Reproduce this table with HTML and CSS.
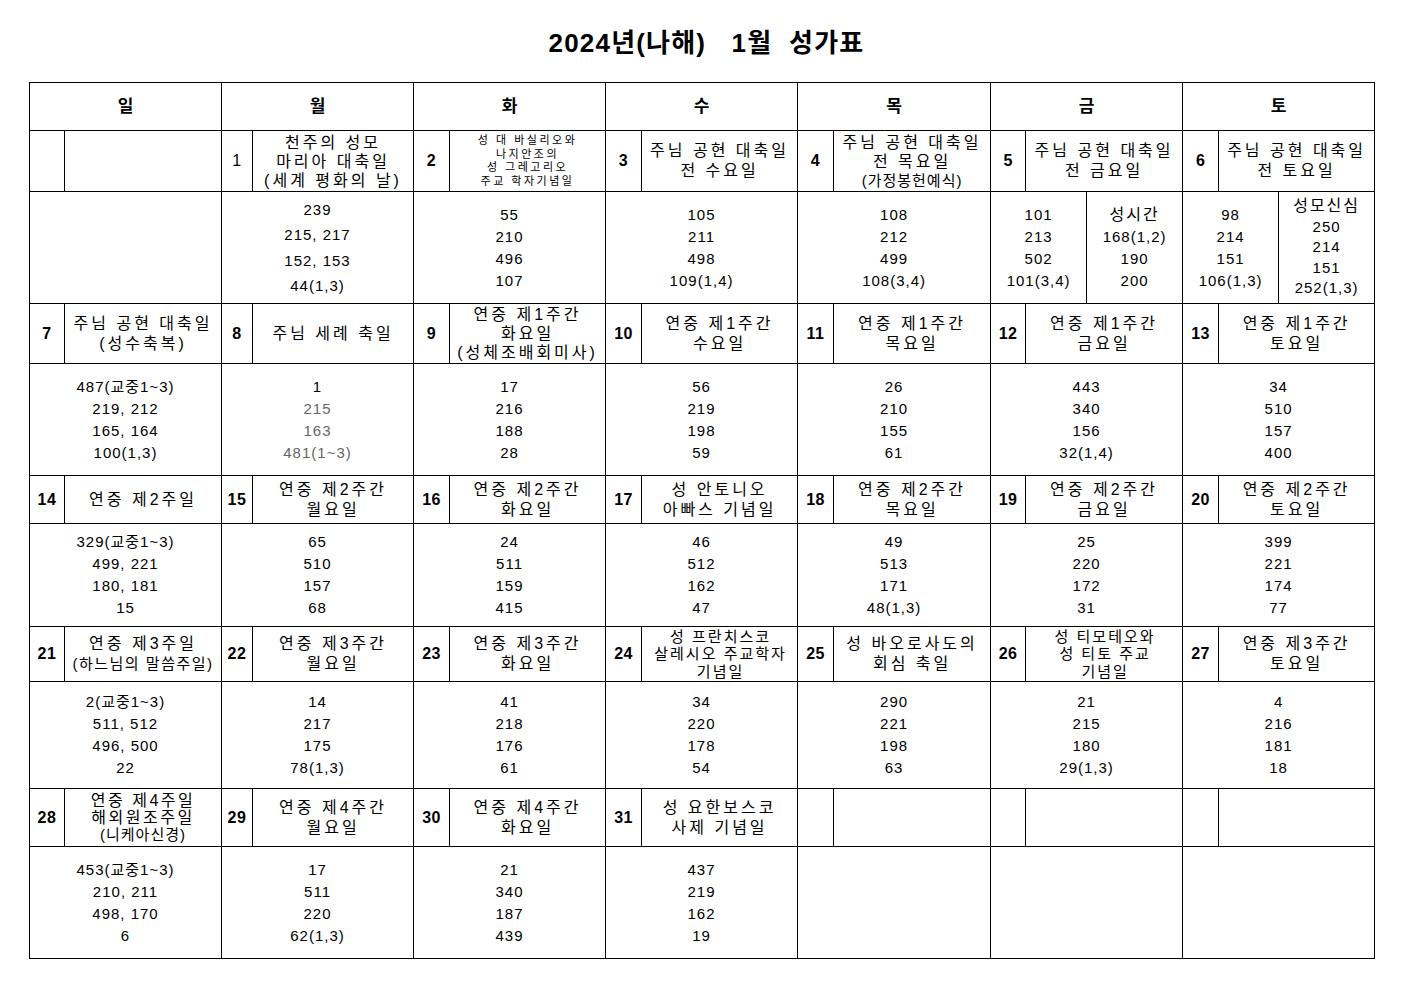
FILE: index.html
```html
<!DOCTYPE html>
<html lang="ko">
<head>
<meta charset="utf-8">
<title>2024년(나해) 1월 성가표</title>
<link rel="stylesheet" href="styles.css">
</head>
<body>
<div class="title">2024년(나해)&nbsp;&nbsp; 1월&nbsp; 성가표</div>
<table class="cal">
  <colgroup>
    <col class="c35"><col class="c157">
    <col class="c31"><col class="c161">
    <col class="c36"><col class="c156">
    <col class="c36"><col class="c156">
    <col class="c36"><col class="c157">
    <col class="c35"><col class="c157">
    <col class="c36"><col class="c156">
  </colgroup>
  <tr class="hd">
    <th colspan="2">일</th><th colspan="2">월</th><th colspan="2">화</th><th colspan="2">수</th><th colspan="2">목</th><th colspan="2">금</th><th colspan="2">토</th>
  </tr>
  <tr class="r61">
    <td class="dn"></td><td class="nm"></td>
    <td class="dn thin">1</td><td class="nm t3">천주의 성모<br>마리아 대축일<br>(세계 평화의 날)</td>
    <td class="dn">2</td><td class="nm tiny">성 대 바실리오와<br>나지안조의<br>성 그레고리오<br>주교 학자기념일</td>
    <td class="dn">3</td><td class="nm">주님 공현 대축일<br>전 수요일</td>
    <td class="dn">4</td><td class="nm t3">주님 공현 대축일<br>전 목요일<br><span class="sm">(가정봉헌예식)</span></td>
    <td class="dn">5</td><td class="nm">주님 공현 대축일<br>전 금요일</td>
    <td class="dn">6</td><td class="nm">주님 공현 대축일<br>전 토요일</td>
  </tr>
  <tr class="r112 hy">
    <td colspan="2"></td>
    <td colspan="2" class="wide">239<br>215, 217<br>152, 153<br>44(1,3)</td>
    <td colspan="2">55<br>210<br>496<br>107</td>
    <td colspan="2">105<br>211<br>498<br>109(1,4)</td>
    <td colspan="2">108<br>212<br>499<br>108(3,4)</td>
    <td colspan="2" class="sp"><div class="split"><div class="half"><div>101<br>213<br>502<br>101(3,4)</div></div><div class="half"><div><span class="lbl">성시간</span><br>168(1,2)<br>190<br>200</div></div></div></td>
    <td colspan="2" class="sp"><div class="split"><div class="half"><div>98<br>214<br>151<br>106(1,3)</div></div><div class="half five"><div><span class="lbl">성모신심</span><br>250<br>214<br>151<br>252(1,3)</div></div></div></td>
  </tr>
  <tr class="r60">
    <td class="dn">7</td><td class="nm">주님 공현 대축일<br>(성수축복)</td>
    <td class="dn">8</td><td class="nm">주님 세례 축일</td>
    <td class="dn">9</td><td class="nm t3">연중 제1주간<br>화요일<br>(성체조배회미사)</td>
    <td class="dn">10</td><td class="nm">연중 제1주간<br>수요일</td>
    <td class="dn">11</td><td class="nm">연중 제1주간<br>목요일</td>
    <td class="dn">12</td><td class="nm">연중 제1주간<br>금요일</td>
    <td class="dn">13</td><td class="nm">연중 제1주간<br>토요일</td>
  </tr>
  <tr class="r112 hy">
    <td colspan="2">487(교중1~3)<br>219, 212<br>165, 164<br>100(1,3)</td>
    <td colspan="2">1<br><span class="gray">215<br>163<br>481(1~3)</span></td>
    <td colspan="2">17<br>216<br>188<br>28</td>
    <td colspan="2">56<br>219<br>198<br>59</td>
    <td colspan="2">26<br>210<br>155<br>61</td>
    <td colspan="2">443<br>340<br>156<br>32(1,4)</td>
    <td colspan="2">34<br>510<br>157<br>400</td>
  </tr>
  <tr class="r48">
    <td class="dn">14</td><td class="nm">연중 제2주일</td>
    <td class="dn">15</td><td class="nm">연중 제2주간<br>월요일</td>
    <td class="dn">16</td><td class="nm">연중 제2주간<br>화요일</td>
    <td class="dn">17</td><td class="nm">성 안토니오<br>아빠스 기념일</td>
    <td class="dn">18</td><td class="nm">연중 제2주간<br>목요일</td>
    <td class="dn">19</td><td class="nm">연중 제2주간<br>금요일</td>
    <td class="dn">20</td><td class="nm">연중 제2주간<br>토요일</td>
  </tr>
  <tr class="r103 hy">
    <td colspan="2">329(교중1~3)<br>499, 221<br>180, 181<br>15</td>
    <td colspan="2">65<br>510<br>157<br>68</td>
    <td colspan="2">24<br>511<br>159<br>415</td>
    <td colspan="2">46<br>512<br>162<br>47</td>
    <td colspan="2">49<br>513<br>171<br>48(1,3)</td>
    <td colspan="2">25<br>220<br>172<br>31</td>
    <td colspan="2">399<br>221<br>174<br>77</td>
  </tr>
  <tr class="r55">
    <td class="dn">21</td><td class="nm">연중 제3주일<br><span class="sm2">(하느님의 말씀주일)</span></td>
    <td class="dn">22</td><td class="nm">연중 제3주간<br>월요일</td>
    <td class="dn">23</td><td class="nm">연중 제3주간<br>화요일</td>
    <td class="dn">24</td><td class="nm s15">성 프란치스코<br>살레시오 주교학자<br>기념일</td>
    <td class="dn">25</td><td class="nm">성 바오로사도의<br>회심 축일</td>
    <td class="dn">26</td><td class="nm s15">성 티모테오와<br>성 티토 주교<br>기념일</td>
    <td class="dn">27</td><td class="nm">연중 제3주간<br>토요일</td>
  </tr>
  <tr class="r107 hy">
    <td colspan="2">2(교중1~3)<br>511, 512<br>496, 500<br>22</td>
    <td colspan="2">14<br>217<br>175<br>78(1,3)</td>
    <td colspan="2">41<br>218<br>176<br>61</td>
    <td colspan="2">34<br>220<br>178<br>54</td>
    <td colspan="2">290<br>221<br>198<br>63</td>
    <td colspan="2">21<br>215<br>180<br>29(1,3)</td>
    <td colspan="2">4<br>216<br>181<br>18</td>
  </tr>
  <tr class="r58">
    <td class="dn">28</td><td class="nm t3b">연중 제4주일<br>해외원조주일<br><span class="sm">(니케아신경)</span></td>
    <td class="dn">29</td><td class="nm">연중 제4주간<br>월요일</td>
    <td class="dn">30</td><td class="nm">연중 제4주간<br>화요일</td>
    <td class="dn">31</td><td class="nm">성 요한보스코<br>사제 기념일</td>
    <td class="dn"></td><td class="nm"></td>
    <td class="dn"></td><td class="nm"></td>
    <td class="dn"></td><td class="nm"></td>
  </tr>
  <tr class="r112 hy">
    <td colspan="2">453(교중1~3)<br>210, 211<br>498, 170<br>6</td>
    <td colspan="2">17<br>511<br>220<br>62(1,3)</td>
    <td colspan="2">21<br>340<br>187<br>439</td>
    <td colspan="2">437<br>219<br>162<br>19</td>
    <td colspan="2"></td>
    <td colspan="2"></td>
    <td colspan="2"></td>
  </tr>
</table>
</body>
</html>
```

FILE: styles.css
```css
html, body {
  margin: 0;
  padding: 0;
  background: #fff;
  color: #000;
  font-family: "Liberation Sans", "Noto Sans CJK KR", sans-serif;
}

.title {
  height: 80px;
  display: flex;
  align-items: center;
  justify-content: center;
  font-size: 26px;
  font-weight: bold;
  letter-spacing: 1.2px;
  padding-left: 10px;
  margin-bottom: 2px;
  box-sizing: border-box;
}

.cal {
  margin-left: 29px;
  border-collapse: collapse;
  table-layout: fixed;
  width: 1345px;
}

.cal th, .cal td {
  border: 1px solid #000;
  padding: 0;
  text-align: center;
  vertical-align: middle;
  overflow: hidden;
}

.c31 { width: 31px; }
.c35 { width: 35px; }
.c36 { width: 36px; }
.c156 { width: 156px; }
.c157 { width: 157px; }
.c161 { width: 161px; }

.hd th {
  height: 43px;
  font-size: 17px;
  font-weight: bold;
  padding-bottom: 4px;
}

.r48 td { height: 47px; }
.r55 td { height: 54px; }
.r58 td { height: 57px; }
.r60 td { height: 59px; }
.r61 td { height: 60px; }
.r103 td { height: 102px; }
.r107 td { height: 106px; }
.r112 td { height: 111px; }

.dn {
  font-size: 16px;
  font-weight: bold;
  letter-spacing: 0.5px;
}
.dn.thin { font-weight: normal; }

.nm {
  font-size: 16px;
  letter-spacing: 3px;
  line-height: 20px;
  padding-left: 3px;
  white-space: nowrap;
}
.nm.t3 { line-height: 19px; }
.nm.t3b { line-height: 17px; letter-spacing: 2.5px; }
.nm.s15 { font-size: 15px; letter-spacing: 2px; line-height: 17.5px; padding-left: 2px; }
.nm.tiny { font-size: 11px; letter-spacing: 2.5px; line-height: 13.5px; }

.sm { font-size: 15px; letter-spacing: 1px; }
.sm2 { font-size: 15px; letter-spacing: 1.5px; }

.hy td {
  font-size: 15px;
  letter-spacing: 1px;
  line-height: 22px;
}
.hy td.wide { line-height: 25.5px; }

.gray { color: #666; }

.hy td.sp { padding: 0; }
.split {
  display: flex;
  height: 111px;
}
.half {
  flex: 1;
  display: flex;
  align-items: center;
  justify-content: center;
  text-align: center;
  white-space: nowrap;
}
.half + .half { border-left: 1px solid #000; }
.half.five { line-height: 20.5px; }
.lbl { font-size: 16px; letter-spacing: 2px; }
```
